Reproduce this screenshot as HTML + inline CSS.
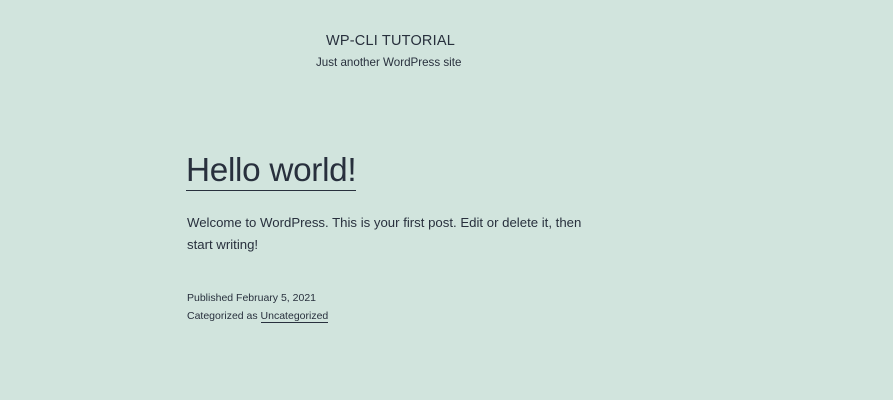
<!DOCTYPE html>
<html><head><style>
body{margin:0;background:#d1e4dd;width:893px;height:400px;overflow:hidden;font-family:"Liberation Sans",sans-serif;color:#28303d;position:relative}
.a{position:absolute;white-space:nowrap}
</style></head><body>
<div class="a" style="left:326px;top:33px;font-size:14.5px;letter-spacing:0.2px">WP-CLI TUTORIAL</div>
<div class="a" style="left:316px;top:56px;font-size:11.6px">Just another WordPress site</div>
<div class="a" style="left:186px;top:151px;font-size:33.3px;line-height:39px;letter-spacing:-0.3px;border-bottom:1px solid #28303d">Hello world!</div>
<div class="a" style="left:187px;top:212px;font-size:13.2px;line-height:22px">Welcome to WordPress. This is your first post. Edit or delete it, then<br>start writing!</div>
<div class="a" style="left:187px;top:289px;font-size:10.5px;line-height:18px">Published February 5, 2021<br>Categorized as <span style="border-bottom:1px solid #28303d">Uncategorized</span></div>
</body></html>
